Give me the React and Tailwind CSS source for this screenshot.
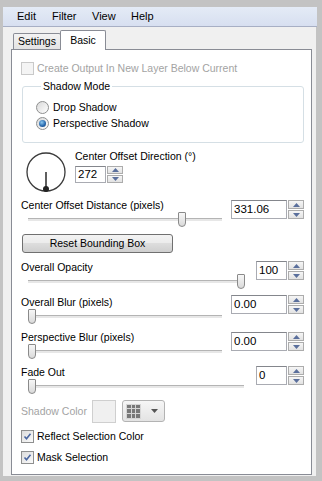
import React from 'react'

const font = { fontFamily: '"Liberation Sans", Arial, sans-serif' }

function Check({ checked, disabled }) {
  return (
    <div
      className={`w-[13px] h-[13px] shrink-0 border flex items-center justify-center ${
        disabled ? 'border-[#c9c9c9] bg-[#f4f4f4]' : 'border-[#8e8f8f] bg-gradient-to-br from-[#dcdcdc] to-[#fbfbfb]'
      }`}
    >
      {checked && (
        <svg width="9" height="9" viewBox="0 0 9 9">
          <path d="M1.5 4.5 L3.5 6.8 L7.5 1.8" fill="none" stroke="#4a66a0" strokeWidth="1.6" />
        </svg>
      )}
    </div>
  )
}

function Radio({ on }) {
  return (
    <div className="w-[13px] h-[13px] shrink-0 rounded-full border border-[#8e8f8f] bg-gradient-to-br from-[#d9d9d9] to-[#ffffff] flex items-center justify-center">
      {on && <div className="w-[7px] h-[7px] rounded-full bg-[radial-gradient(circle_at_40%_35%,#8cc8f0,#2a6bb0_55%,#123b70)]" />}
    </div>
  )
}

function SpinArrows({ h = 19 }) {
  const half = h === 17 ? 'h-[8px]' : 'h-[9px]'
  return (
    <div className="flex flex-col gap-px ml-px">
      <div className={`w-[16px] ${half} border border-[#acacac] bg-gradient-to-b from-[#f6f6f6] to-[#e2e2e2] flex items-center justify-center`}>
        <svg width="7" height="4" viewBox="0 0 7 4"><path d="M0 4 L3.5 0 L7 4 Z" fill="#5a6f9c" /></svg>
      </div>
      <div className={`w-[16px] ${half} border border-[#acacac] bg-gradient-to-b from-[#f6f6f6] to-[#e2e2e2] flex items-center justify-center`}>
        <svg width="7" height="4" viewBox="0 0 7 4"><path d="M0 0 L7 0 L3.5 4 Z" fill="#5a6f9c" /></svg>
      </div>
    </div>
  )
}

function SpinBox({ value, wide, top }) {
  return (
    <div className={`flex shrink-0 ${top}`}>
      <div
        className={`${wide ? 'w-[56px]' : 'w-[31px]'} h-[19px] border border-[#a9abb2] border-t-[#84868c] bg-white pl-[2px] text-[11.5px] leading-[17px] text-black`}
      >
        {value}
      </div>
      <SpinArrows />
    </div>
  )
}

function Slider({ width, pos }) {
  return (
    <div className={`relative h-[14px] ml-[7px] flex items-center ${width}`}>
      <div className="w-full h-[3px] border-t border-[#b4b4b4] bg-[#e7e7e7]" />
      <div
        className="absolute top-0 w-[8px] h-[15px] border border-[#8a8a8a] rounded-t-[1px] rounded-b-[4px] bg-gradient-to-b from-[#f7f7f7] to-[#dadada]"
        style={{ left: pos }}
      />
    </div>
  )
}

function Section({ label, value, wide, pos, spinTop, className = '' }) {
  return (
    <div className={`flex items-start ${className}`}>
      <div className="flex-1 flex flex-col">
        <div className="leading-[14px]">{label}</div>
        <Slider width={wide ? 'w-[194px]' : 'w-[216px]'} pos={pos} />
      </div>
      <SpinBox value={value} wide={wide} top={spinTop} />
    </div>
  )
}

export default function App() {
  return (
    <div className="w-[322px] h-[481px] bg-[#c3c3c3] pt-[7px] pl-[3px] pr-[5px] pb-[5px] flex flex-col text-[10.5px] text-black" style={font}>
      <div className="flex-1 flex flex-col bg-[#f0f0f0]">
        {/* Menu */}
        <div className="h-[20px] border-b border-[#a7afc4] bg-gradient-to-b from-[#e4ebf6] to-[#d7dff0] flex items-center pl-[14px] text-[11px]">
          <span className="w-[35px]">Edit</span>
          <span className="w-[40px]">Filter</span>
          <span className="w-[39px]">View</span>
          <span>Help</span>
        </div>

        <div className="flex-1 flex">
          <div className="flex-1 flex flex-col pl-[8px] pt-[3px] pb-px">
            {/* Tabs */}
            <div className="h-[19px] flex items-end pl-[2px]">
              <div className="w-[48px] h-[16px] border border-b-0 border-[#898c95] rounded-t-[2px] bg-gradient-to-b from-[#f3f3f3] to-[#e3e3e3] flex items-center justify-center">
                Settings
              </div>
              <div className="relative z-10 w-[46px] h-[20px] -mb-px -ml-px border border-b-0 border-[#898c95] rounded-t-[2px] bg-white flex items-center justify-center">
                Basic
              </div>
            </div>

            {/* Panel */}
            <div className="flex-1 border border-[#898c95] bg-white flex flex-col pl-[9px] pr-[7px]">
              <div className="mt-[12px] h-[13px] flex items-center gap-[3px] text-[#a3a3a3]">
                <Check disabled />
                <span className="leading-[13px]">Create Output In New Layer Below Current</span>
              </div>

              <fieldset className="mt-[4px] ml-px w-[282px] border border-[#d5dfe5] rounded-[3px] pl-[13px] pb-[12px]">
                <legend className="ml-[5px] px-[2px] leading-[14px]">Shadow Mode</legend>
                <div className="mt-[8px] h-[13px] flex items-center gap-[4px]">
                  <Radio />
                  <span>Drop Shadow</span>
                </div>
                <div className="mt-[3px] h-[13px] flex items-center gap-[4px]">
                  <Radio on />
                  <span>Perspective Shadow</span>
                </div>
              </fieldset>

              <div className="mt-[6px] flex items-start">
                <svg className="mt-[2px] ml-[4px] shrink-0" width="42" height="42" viewBox="0 0 42 42">
                  <circle cx="21" cy="21" r="19" fill="none" stroke="#3a3a3a" strokeWidth="1.3" />
                  <line x1="21" y1="21" x2="21" y2="38" stroke="#2a2a2a" strokeWidth="1.5" />
                  <circle cx="21" cy="38" r="3" fill="#222" />
                </svg>
                <div className="ml-[8px] flex flex-col">
                  <div className="leading-[14px]">Center Offset Direction (°)</div>
                  <div className="mt-[3px] flex">
                    <div className="w-[31px] h-[17px] border border-[#a9abb2] border-t-[#84868c] bg-white pl-[2px] text-[11.5px] leading-[15px]">
                      272
                    </div>
                    <SpinArrows h={17} />
                  </div>
                </div>
              </div>

              <Section className="mt-[5px]" label="Center Offset Distance (pixels)" value="331.06" wide pos={150} spinTop="mt-[2px]" />

              <button className="mt-[8px] ml-px w-[151px] h-[19px] border border-[#707070] rounded-[3px] bg-[linear-gradient(#f3f3f3,#ebebeb_50%,#dddddd_50%,#cfcfcf)] text-[10.5px] leading-[17px] text-center">
                Reset Bounding Box
              </button>

              <Section className="mt-[7px]" label="Overall Opacity" value="100" pos={209} spinTop="mt-[1px]" />
              <Section className="mt-[7px]" label="Overall Blur (pixels)" value="0.00" wide pos={0} spinTop="mt-0" />
              <Section className="mt-[7px]" label="Perspective Blur (pixels)" value="0.00" wide pos={0} spinTop="mt-[2px]" />
              <Section className="mt-[7px]" label="Fade Out" value="0" pos={0} spinTop="mt-[1px]" />

              <div className="mt-[7px] h-[23px] flex items-start">
                <span className="leading-[23px] text-[#a3a3a3] w-[71px]">Shadow Color</span>
                <div className="w-[24px] h-[23px] border border-[#cfcfcf] bg-[#f0f0f0]" />
                <div className="ml-[6px] w-[43px] h-[22px] border border-[#b3b3b3] rounded-[3px] bg-gradient-to-b from-[#f6f6f6] to-[#e3e3e3] flex items-center pl-[3px]">
                  <div className="grid grid-cols-3 gap-px w-[15px] h-[15px] bg-[#d6d6d6] p-px">
                    {Array.from({ length: 9 }).map((_, i) => (
                      <div key={i} className="bg-[#787878]" />
                    ))}
                  </div>
                  <svg className="ml-[10px]" width="7" height="4" viewBox="0 0 7 4"><path d="M0 0 L7 0 L3.5 4 Z" fill="#555" /></svg>
                </div>
              </div>

              <div className="mt-[7px] h-[13px] flex items-center gap-[3px]">
                <Check checked />
                <span>Reflect Selection Color</span>
              </div>
              <div className="mt-[8px] h-[13px] flex items-center gap-[3px]">
                <Check checked />
                <span>Mask Selection</span>
              </div>
            </div>
          </div>
          <div className="w-[5px]" />
          <div className="w-px bg-[#7c7c7c]" />
          <div className="w-px bg-[#c3c3c3]" />
        </div>
      </div>
    </div>
  )
}
